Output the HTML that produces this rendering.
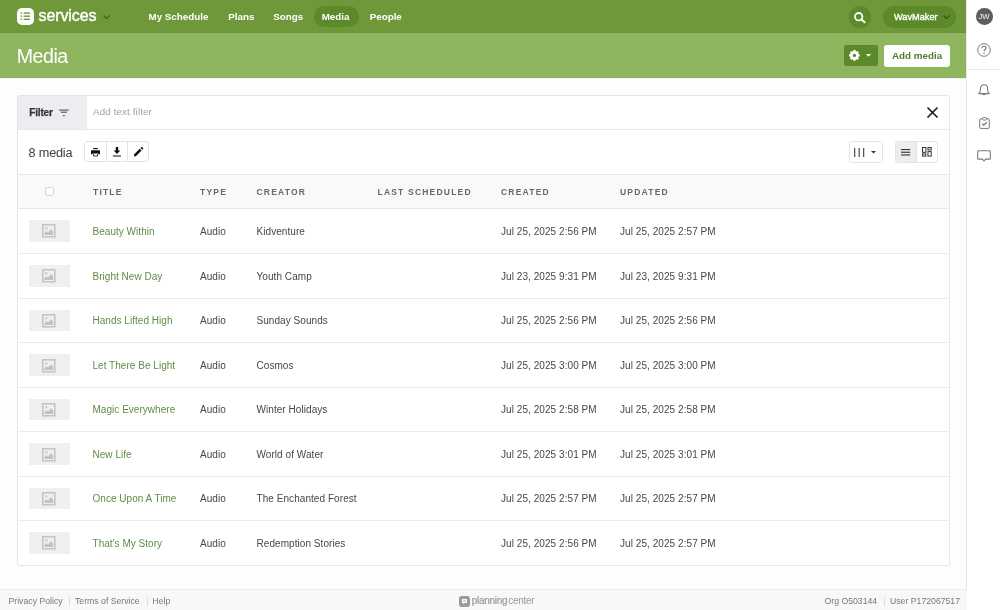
<!DOCTYPE html>
<html><head><meta charset="utf-8">
<style>
*{box-sizing:border-box;margin:0;padding:0}
html,body{width:1000px;height:610px;overflow:hidden;background:#fdfcfe;font-family:"Liberation Sans",sans-serif;color:#333;position:relative}
.a{position:absolute;white-space:nowrap;line-height:1}
svg{position:absolute;overflow:visible}
#nav{position:absolute;left:0;top:0;width:967px;height:33px;background:#6e983a;border-bottom:1px solid #6a9338}
#hdr{position:absolute;left:0;top:33px;width:967px;height:45px;background:#8fb65e;border-bottom:1px solid #8cb05e;box-shadow:0 1px 0 #f3f2f5}
#side{position:absolute;left:966px;top:0;width:34px;height:610px;background:#fff;border-left:1px solid #e8e8ea}
.ni{font-size:9.8px;font-weight:bold;color:#fff;top:12.2px}
#card{position:absolute;left:17px;top:95px;width:933px;height:471px;background:#fff;border:1px solid #e6e6e8;border-radius:2px;overflow:hidden}
#footer{position:absolute;left:0;top:589px;width:967px;height:21px;background:#f8f8f9;border-top:1px solid #e8e8ea}
.th{font-size:8.5px;font-weight:bold;color:#68686a;letter-spacing:1.2px;top:187.8px}
.td{font-size:10px;letter-spacing:0.06px;color:#474747}
.tl{font-size:10px;letter-spacing:0.03px;color:#5f8c45}
.rowb{position:absolute;left:17px;width:933px;height:1px;background:#ececee}
.thumb{position:absolute;left:28.7px;width:41.3px;height:21.5px;background:#efeff0}
.ft{font-size:8.7px;color:#777;top:597px}
</style></head><body><div id="root" style="position:absolute;left:0;top:0;width:1000px;height:610px;will-change:transform">
<div id="nav"></div>
<div id="hdr"></div>
<div id="side"></div>
<div id="footer"></div>

<!-- NAV -->
<div class="a" style="left:16.5px;top:8px;width:17px;height:17px;background:#fff;border-radius:5px"></div>
<svg style="left:16.5px;top:8px" width="17" height="17" viewBox="0 0 17 17">
  <g fill="#6e983a"><rect x="3.6" y="4.4" width="1.5" height="1.4"/><rect x="6.6" y="4.4" width="6.3" height="1.4"/><rect x="3.6" y="7.5" width="1.5" height="1.4"/><rect x="6.6" y="7.5" width="6.3" height="1.4"/><rect x="3.6" y="10.6" width="1.5" height="1.4"/><rect x="6.6" y="10.6" width="6.3" height="1.4"/></g>
</svg>
<div class="a" style="left:38.5px;top:7.5px;font-size:16px;color:#fff;letter-spacing:-0.1px;-webkit-text-stroke:0.4px #fff">services</div>
<svg style="left:103.2px;top:14.6px" width="7" height="4" viewBox="0 0 7 4"><polyline points="0.5,0.5 3.5,3.4 6.5,0.5" fill="none" stroke="#3b6421" stroke-width="1.2"/></svg>
<div class="a ni" style="left:148.5px">My Schedule</div>
<div class="a ni" style="left:228.2px">Plans</div>
<div class="a ni" style="left:273.2px">Songs</div>
<div class="a" style="left:313.7px;top:5.7px;width:45px;height:21.8px;border-radius:11px;background:#5c8a2a"></div>
<div class="a ni" style="left:321.7px">Media</div>
<div class="a ni" style="left:369.7px">People</div>
<div class="a" style="left:849px;top:6px;width:22px;height:22px;border-radius:11px;background:#5c8a2a"></div>
<svg style="left:854px;top:11.5px" width="12" height="11" viewBox="0 0 12 11"><circle cx="4.7" cy="4.7" r="3.7" fill="none" stroke="#fff" stroke-width="1.8"/><line x1="7.5" y1="7.5" x2="10.6" y2="10.3" stroke="#fff" stroke-width="1.9" stroke-linecap="round"/></svg>
<div class="a" style="left:883px;top:6px;width:72.5px;height:21.5px;border-radius:11px;background:#5c8a2a"></div>
<div class="a" style="left:894px;top:13.2px;font-size:9.2px;color:#fff;-webkit-text-stroke:0.35px #fff">WavMaker</div>
<svg style="left:943.3px;top:14.8px" width="7" height="4" viewBox="0 0 7 4"><polyline points="0.5,0.5 3.5,3.4 6.5,0.5" fill="none" stroke="#2f541a" stroke-width="1.1"/></svg>

<!-- HEADER -->
<div class="a" style="left:16.8px;top:47.3px;font-size:19.6px;letter-spacing:-0.5px;color:#fff">Media</div>
<div class="a" style="left:844px;top:44.8px;width:34px;height:21.5px;border-radius:2px;background:#5c8a2a"></div>
<svg style="left:848.7px;top:49.9px" width="10.8" height="10.8" viewBox="0 0 12 12"><path fill="#fff" fill-rule="evenodd" d="M10.21 4.41 L11.88 4.81 L11.88 7.19 L10.21 7.59 L10.10 7.86 L11.00 9.32 L9.32 11.00 L7.86 10.10 L7.59 10.21 L7.19 11.88 L4.81 11.88 L4.41 10.21 L4.14 10.10 L2.68 11.00 L1.00 9.32 L1.90 7.86 L1.79 7.59 L0.12 7.19 L0.12 4.81 L1.79 4.41 L1.90 4.14 L1.00 2.68 L2.68 1.00 L4.14 1.90 L4.41 1.79 L4.81 0.12 L7.19 0.12 L7.59 1.79 L7.86 1.90 L9.32 1.00 L11.00 2.68 L10.10 4.14Z M7.9 6 A1.9 1.9 0 1 0 4.1 6 A1.9 1.9 0 1 0 7.9 6Z"/></svg>
<svg style="left:866.4px;top:54.4px" width="5" height="3" viewBox="0 0 5 3"><polygon points="0,0 5,0 2.5,2.8" fill="#fff"/></svg>
<div class="a" style="left:884.2px;top:44.5px;width:65.8px;height:22px;border-radius:3px;background:#fff"></div>
<div class="a" style="left:892px;top:50.5px;font-size:9.8px;font-weight:bold;color:#4f7d2b">Add media</div>

<!-- SIDEBAR -->
<div class="a" style="left:976px;top:8.3px;width:16.5px;height:16.5px;border-radius:50%;background:#5e5e60"></div>
<div class="a" style="left:978.5px;top:12.8px;font-size:7.7px;color:#fff">JW</div>
<svg style="left:976.8px;top:43.2px" width="14" height="14" viewBox="0 0 14 14"><circle cx="7" cy="7" r="6.3" fill="none" stroke="#777" stroke-width="1"/><path d="M4.9 5.3c0-1.2.9-2 2.1-2s2.1.8 2.1 1.9c0 1.5-2.1 1.5-2.1 3.1" fill="none" stroke="#777" stroke-width="1.1"/><circle cx="7" cy="10.3" r="0.7" fill="#777"/></svg>
<div class="a" style="left:967px;top:69px;width:33px;height:1px;background:#e6e6e8"></div>
<svg style="left:978px;top:83.6px" width="12" height="12" viewBox="0 0 12 12"><path d="M0.8 9.6C1.9 8.6 2.4 7.6 2.4 6V4.6C2.4 2.4 4 0.8 6 0.8S9.6 2.4 9.6 4.6V6C9.6 7.6 10.1 8.6 11.2 9.6Z" fill="none" stroke="#777" stroke-width="1.05" stroke-linejoin="round"/><path d="M4.6 9.9Q6 11.6 7.4 9.9" fill="none" stroke="#777" stroke-width="1.05"/></svg>
<svg style="left:978.5px;top:117px" width="11" height="12" viewBox="0 0 11 12"><rect x="0.7" y="1.8" width="9.6" height="9.6" rx="1" fill="none" stroke="#777" stroke-width="1"/><rect x="3.3" y="0.6" width="4.4" height="2.4" rx="1" fill="#fff" stroke="#777" stroke-width="1"/><polyline points="3.2,6.7 4.8,8.2 7.8,5.3" fill="none" stroke="#777" stroke-width="1.3"/></svg>
<svg style="left:977px;top:150px" width="14" height="12" viewBox="0 0 14 12"><path d="M1.2 0.7h11.6c.3 0 .5.2.5.5v7.4c0 .3-.2.5-.5.5H8.5L7 11 5.5 9.1H1.2c-.3 0-.5-.2-.5-.5V1.2c0-.3.2-.5.5-.5z" fill="none" stroke="#777" stroke-width="1.05" stroke-linejoin="round"/></svg>

<!-- CARD -->
<div id="card"></div>
<div class="a" style="left:18px;top:96px;width:69px;height:33px;background:#edecf0;border-top-left-radius:2px"></div>
<div class="a" style="left:18px;top:129px;width:931px;height:1px;background:#e6e6e8"></div>
<div class="a" style="left:18px;top:174px;width:931px;height:35px;background:#f9f9fb;border-top:1px solid #e8e8ea;border-bottom:1px solid #e8e8ea"></div>
<div class="a" style="left:29.2px;top:108px;font-size:10px;font-weight:bold;letter-spacing:-0.15px;color:#333;-webkit-text-stroke:0.25px #333">Filter</div>
<svg style="left:59px;top:108.5px" width="10" height="8" viewBox="0 0 10 8"><g stroke="#555" stroke-width="1.1"><line x1="0" y1="1.1" x2="9.8" y2="1.1"/><line x1="1.9" y1="3.2" x2="7.9" y2="3.2"/><line x1="4.1" y1="6.6" x2="5.8" y2="6.6"/></g></svg>
<div class="a" style="left:93px;top:107.3px;font-size:9.8px;letter-spacing:0.12px;color:#a2a2a4">Add text filter</div>
<svg style="left:927px;top:107.3px" width="11" height="11" viewBox="0 0 11 11"><g stroke="#222" stroke-width="1.7"><line x1="0.5" y1="0.5" x2="10.5" y2="10.5"/><line x1="10.5" y1="0.5" x2="0.5" y2="10.5"/></g></svg>

<div class="a" style="left:28.6px;top:147px;font-size:12.7px;letter-spacing:-0.2px;color:#3f3f3f">8 media</div>
<div class="a" style="left:84.4px;top:141.2px;width:64.9px;height:21.2px;border:1px solid #e4e4e6;border-radius:3px;background:#fff"></div>
<div class="a" style="left:106.2px;top:141.2px;width:1px;height:21.2px;background:#e4e4e6"></div>
<div class="a" style="left:127.3px;top:141.3px;width:1px;height:21.2px;background:#e4e4e6"></div>
<svg style="left:90.9px;top:148px" width="9" height="8.4" viewBox="0 0 9 8.4"><rect x="2.2" y="0" width="4.6" height="1.1" fill="#111"/><path d="M1 2.2h7c.55 0 1 .45 1 1v3H7.4V5.2H1.6v1H0v-3c0-.55.45-1 1-1z" fill="#111"/><path d="M2.2 5.6h4.6v2.8H2.2z" fill="#111"/><rect x="3" y="6" width="3" height="1.6" fill="#fff"/></svg>
<svg style="left:113px;top:147.3px" width="8" height="9.5" viewBox="0 0 8 9.5"><path d="M2.8 0h2.4v3.6h2.1L4 6.9 0.7 3.6h2.1z" fill="#111"/><rect x="0" y="8.5" width="8" height="1" fill="#111"/></svg>
<svg style="left:133.8px;top:147.4px" width="9.3" height="9.3" viewBox="0 0 9.5 9.5"><path d="M0 7.6L5.8 1.8l1.9 1.9L1.9 9.5H0z M6.6 1L7.4 0.2c.3-.3.7-.3 1 0l.9.9c.3.3.3.7 0 1L8.5 2.9z" fill="#111"/></svg>

<div class="a" style="left:848.6px;top:141.3px;width:34.2px;height:21.4px;border:1px solid #e4e4e6;border-radius:3px;background:#fff"></div>
<svg style="left:854px;top:147.8px" width="11" height="9" viewBox="0 0 11 9"><g fill="#444"><rect x="0.1" y="0" width="1.15" height="9"/><rect x="4.6" y="0" width="1.15" height="9"/><rect x="9.1" y="0" width="1.15" height="9"/></g></svg>
<svg style="left:871px;top:150.5px" width="5" height="3" viewBox="0 0 5 3"><polygon points="0,0 5,0 2.5,2.6" fill="#333"/></svg>
<div class="a" style="left:894.5px;top:141.3px;width:43.2px;height:21.4px;border:1px solid #e4e4e6;border-radius:3px;background:#fff;overflow:hidden"><div style="position:absolute;left:0;top:0;width:21.8px;height:20px;background:#ededee;border-right:1px solid #e4e4e6"></div></div>
<svg style="left:900.9px;top:148.7px" width="9.2" height="6.6" viewBox="0 0 9.2 6.6"><g fill="#333"><rect x="0" y="0" width="9.2" height="1.1"/><rect x="0" y="2.7" width="9.2" height="1.1"/><rect x="0" y="5.4" width="9.2" height="1.1"/></g></svg>
<svg style="left:922.3px;top:147.3px" width="9.5" height="9.5" viewBox="0 0 9.5 9.5"><g fill="none" stroke="#333" stroke-width="1"><rect x="0.5" y="0.5" width="3.4" height="4.8"/><rect x="6" y="0.5" width="3.2" height="2.4"/><rect x="0.5" y="6.9" width="3.4" height="2.2"/><rect x="6" y="4.6" width="3.2" height="4.5"/></g></svg>

<!-- TABLE HEADER -->
<div class="a" style="left:44.9px;top:187.2px;width:8.9px;height:8.8px;border:1px solid #cfcfd1;border-radius:2.5px;background:#fff"></div>
<div class="a th" style="left:93px">TITLE</div>
<div class="a th" style="left:200px">TYPE</div>
<div class="a th" style="left:256.5px">CREATOR</div>
<div class="a th" style="left:377.5px">LAST SCHEDULED</div>
<div class="a th" style="left:501px">CREATED</div>
<div class="a th" style="left:620px">UPDATED</div>

<div id="rows">
<div class="thumb" style="top:220.00px"></div>
<svg style="left:42.4px;top:224.30px" width="13.6" height="13.6" viewBox="0 0 13.6 13.6"><rect x="0.8" y="0.8" width="12" height="12" fill="none" stroke="#c2c2c4" stroke-width="1.5"/><circle cx="4.3" cy="4.4" r="1.1" fill="#c2c2c4"/><path d="M2.4 11.1V8.9L4.5 7.3 6.1 8.5 9 5.3 11.2 7.6V11.1z" fill="#c2c2c4"/></svg>
<div class="a tl" style="left:92.5px;top:226.74px">Beauty Within</div>
<div class="a td" style="left:200px;top:226.74px">Audio</div>
<div class="a td" style="left:256.5px;top:226.74px">Kidventure</div>
<div class="a td" style="left:501px;top:226.74px">Jul 25, 2025 2:56 PM</div>
<div class="a td" style="left:620px;top:226.74px">Jul 25, 2025 2:57 PM</div>
<div class="rowb" style="top:253px"></div>
<div class="thumb" style="top:265.00px"></div>
<svg style="left:42.4px;top:269.30px" width="13.6" height="13.6" viewBox="0 0 13.6 13.6"><rect x="0.8" y="0.8" width="12" height="12" fill="none" stroke="#c2c2c4" stroke-width="1.5"/><circle cx="4.3" cy="4.4" r="1.1" fill="#c2c2c4"/><path d="M2.4 11.1V8.9L4.5 7.3 6.1 8.5 9 5.3 11.2 7.6V11.1z" fill="#c2c2c4"/></svg>
<div class="a tl" style="left:92.5px;top:271.74px">Bright New Day</div>
<div class="a td" style="left:200px;top:271.74px">Audio</div>
<div class="a td" style="left:256.5px;top:271.74px">Youth Camp</div>
<div class="a td" style="left:501px;top:271.74px">Jul 23, 2025 9:31 PM</div>
<div class="a td" style="left:620px;top:271.74px">Jul 23, 2025 9:31 PM</div>
<div class="rowb" style="top:298px"></div>
<div class="thumb" style="top:309.75px"></div>
<svg style="left:42.4px;top:314.05px" width="13.6" height="13.6" viewBox="0 0 13.6 13.6"><rect x="0.8" y="0.8" width="12" height="12" fill="none" stroke="#c2c2c4" stroke-width="1.5"/><circle cx="4.3" cy="4.4" r="1.1" fill="#c2c2c4"/><path d="M2.4 11.1V8.9L4.5 7.3 6.1 8.5 9 5.3 11.2 7.6V11.1z" fill="#c2c2c4"/></svg>
<div class="a tl" style="left:92.5px;top:316.49px">Hands Lifted High</div>
<div class="a td" style="left:200px;top:316.49px">Audio</div>
<div class="a td" style="left:256.5px;top:316.49px">Sunday Sounds</div>
<div class="a td" style="left:501px;top:316.49px">Jul 25, 2025 2:56 PM</div>
<div class="a td" style="left:620px;top:316.49px">Jul 25, 2025 2:56 PM</div>
<div class="rowb" style="top:342px"></div>
<div class="thumb" style="top:354.25px"></div>
<svg style="left:42.4px;top:358.55px" width="13.6" height="13.6" viewBox="0 0 13.6 13.6"><rect x="0.8" y="0.8" width="12" height="12" fill="none" stroke="#c2c2c4" stroke-width="1.5"/><circle cx="4.3" cy="4.4" r="1.1" fill="#c2c2c4"/><path d="M2.4 11.1V8.9L4.5 7.3 6.1 8.5 9 5.3 11.2 7.6V11.1z" fill="#c2c2c4"/></svg>
<div class="a tl" style="left:92.5px;top:360.99px">Let There Be Light</div>
<div class="a td" style="left:200px;top:360.99px">Audio</div>
<div class="a td" style="left:256.5px;top:360.99px">Cosmos</div>
<div class="a td" style="left:501px;top:360.99px">Jul 25, 2025 3:00 PM</div>
<div class="a td" style="left:620px;top:360.99px">Jul 25, 2025 3:00 PM</div>
<div class="rowb" style="top:387px"></div>
<div class="thumb" style="top:398.75px"></div>
<svg style="left:42.4px;top:403.05px" width="13.6" height="13.6" viewBox="0 0 13.6 13.6"><rect x="0.8" y="0.8" width="12" height="12" fill="none" stroke="#c2c2c4" stroke-width="1.5"/><circle cx="4.3" cy="4.4" r="1.1" fill="#c2c2c4"/><path d="M2.4 11.1V8.9L4.5 7.3 6.1 8.5 9 5.3 11.2 7.6V11.1z" fill="#c2c2c4"/></svg>
<div class="a tl" style="left:92.5px;top:405.49px">Magic Everywhere</div>
<div class="a td" style="left:200px;top:405.49px">Audio</div>
<div class="a td" style="left:256.5px;top:405.49px">Winter Holidays</div>
<div class="a td" style="left:501px;top:405.49px">Jul 25, 2025 2:58 PM</div>
<div class="a td" style="left:620px;top:405.49px">Jul 25, 2025 2:58 PM</div>
<div class="rowb" style="top:431px"></div>
<div class="thumb" style="top:443.25px"></div>
<svg style="left:42.4px;top:447.55px" width="13.6" height="13.6" viewBox="0 0 13.6 13.6"><rect x="0.8" y="0.8" width="12" height="12" fill="none" stroke="#c2c2c4" stroke-width="1.5"/><circle cx="4.3" cy="4.4" r="1.1" fill="#c2c2c4"/><path d="M2.4 11.1V8.9L4.5 7.3 6.1 8.5 9 5.3 11.2 7.6V11.1z" fill="#c2c2c4"/></svg>
<div class="a tl" style="left:92.5px;top:449.99px">New Life</div>
<div class="a td" style="left:200px;top:449.99px">Audio</div>
<div class="a td" style="left:256.5px;top:449.99px">World of Water</div>
<div class="a td" style="left:501px;top:449.99px">Jul 25, 2025 3:01 PM</div>
<div class="a td" style="left:620px;top:449.99px">Jul 25, 2025 3:01 PM</div>
<div class="rowb" style="top:476px"></div>
<div class="thumb" style="top:487.50px"></div>
<svg style="left:42.4px;top:491.80px" width="13.6" height="13.6" viewBox="0 0 13.6 13.6"><rect x="0.8" y="0.8" width="12" height="12" fill="none" stroke="#c2c2c4" stroke-width="1.5"/><circle cx="4.3" cy="4.4" r="1.1" fill="#c2c2c4"/><path d="M2.4 11.1V8.9L4.5 7.3 6.1 8.5 9 5.3 11.2 7.6V11.1z" fill="#c2c2c4"/></svg>
<div class="a tl" style="left:92.5px;top:494.24px">Once Upon A Time</div>
<div class="a td" style="left:200px;top:494.24px">Audio</div>
<div class="a td" style="left:256.5px;top:494.24px">The Enchanted Forest</div>
<div class="a td" style="left:501px;top:494.24px">Jul 25, 2025 2:57 PM</div>
<div class="a td" style="left:620px;top:494.24px">Jul 25, 2025 2:57 PM</div>
<div class="rowb" style="top:520px"></div>
<div class="thumb" style="top:532.00px"></div>
<svg style="left:42.4px;top:536.30px" width="13.6" height="13.6" viewBox="0 0 13.6 13.6"><rect x="0.8" y="0.8" width="12" height="12" fill="none" stroke="#c2c2c4" stroke-width="1.5"/><circle cx="4.3" cy="4.4" r="1.1" fill="#c2c2c4"/><path d="M2.4 11.1V8.9L4.5 7.3 6.1 8.5 9 5.3 11.2 7.6V11.1z" fill="#c2c2c4"/></svg>
<div class="a tl" style="left:92.5px;top:538.73px">That's My Story</div>
<div class="a td" style="left:200px;top:538.73px">Audio</div>
<div class="a td" style="left:256.5px;top:538.73px">Redemption Stories</div>
<div class="a td" style="left:501px;top:538.73px">Jul 25, 2025 2:56 PM</div>
<div class="a td" style="left:620px;top:538.73px">Jul 25, 2025 2:57 PM</div>
</div>
<!-- FOOTER -->
<div class="a ft" style="left:8.5px">Privacy Policy</div>
<div class="a" style="left:69px;top:596.5px;width:1px;height:9px;background:#ddd"></div>
<div class="a ft" style="left:75px">Terms of Service</div>
<div class="a" style="left:146.5px;top:596.5px;width:1px;height:9px;background:#ddd"></div>
<div class="a ft" style="left:152.5px">Help</div>
<svg style="left:459px;top:596px" width="11" height="11" viewBox="0 0 11 11"><path d="M2.5 0h6c.9 0 1.4.3 1.9 1.1L11 2.5v6c0 .9-.3 1.4-1.1 1.9L8.5 11h-6c-.9 0-1.4-.3-1.9-1.1L0 8.5v-6c0-.9.3-1.4 1.1-1.9z" fill="#9a9a9c"/><path d="M3 3h5v4H5.5L4.2 8.3V7H3z" fill="#f8f8f9"/><rect x="4.3" y="4.6" width="2.4" height="0.9" fill="#9a9a9c"/></svg>
<div class="a" style="left:471.8px;top:596px;font-size:10px;color:#9a9a9c;letter-spacing:-0.3px;-webkit-text-stroke:0.2px #9a9a9c">planning</div>
<div class="a" style="left:508.3px;top:596px;font-size:10px;color:#9a9a9c;letter-spacing:-0.3px">center</div>
<div class="a ft" style="left:824.5px">Org O503144</div>
<div class="a" style="left:884px;top:596.5px;width:1px;height:9px;background:#ddd"></div>
<div class="a ft" style="left:890px">User P172067517</div>
</div></body></html>
